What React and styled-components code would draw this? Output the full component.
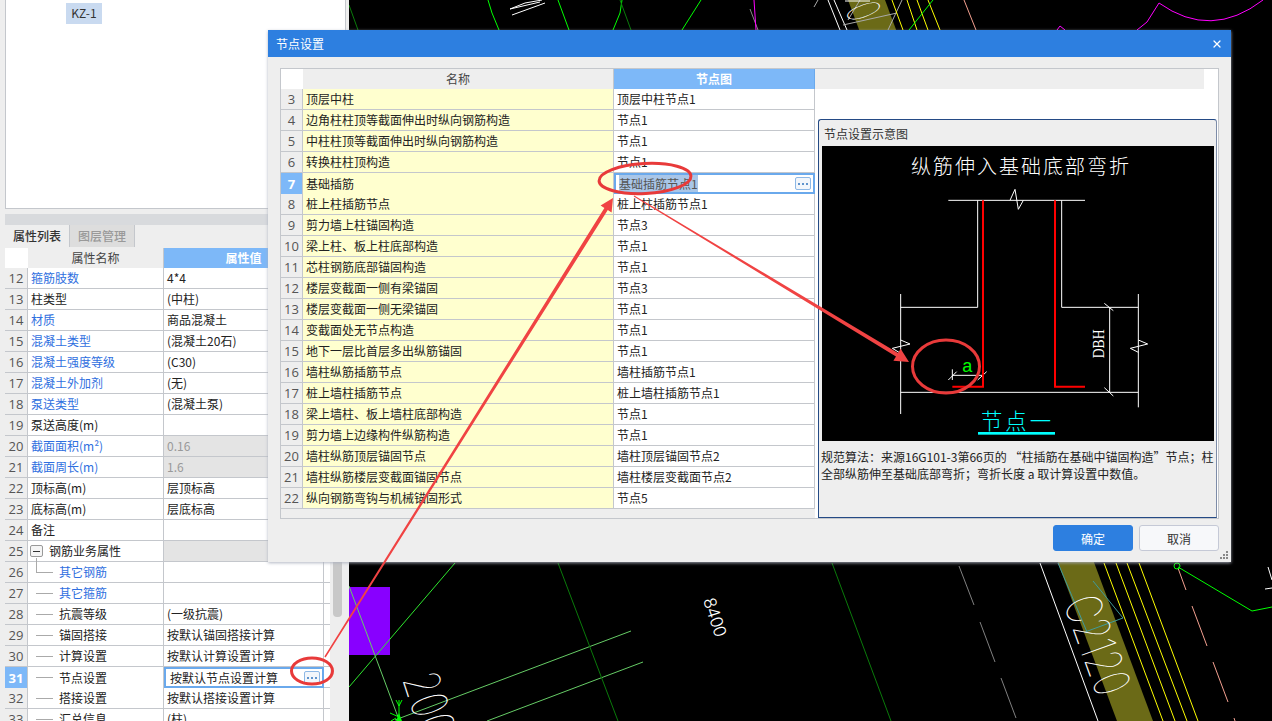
import React from "react";
import styled, { createGlobalStyle } from "styled-components";
import { X } from "lucide-react";

const GlobalStyle = createGlobalStyle`
  html, body { margin: 0; padding: 0; background: #000; }
  * { box-sizing: border-box; }
  body {
    font-family: "Noto Sans CJK SC", "Liberation Sans", sans-serif;
    font-size: 12px;
    color: #222;
  }
`;

const LINE = "#c4c7cc";
const BLUE_HEAD = "#7db8f8";
const BLUE_EDGE = "#6aa9ec";

const Page = styled.div`
  position: relative;
  display: flex;
  width: 1272px;
  height: 721px;
  overflow: hidden;
  background: #000;
`;

const LeftPanel = styled.div`
  flex: 0 0 349px;
  display: flex;
  flex-direction: column;
  padding-left: 5px;
  background: #eee;
`;

const TreeBox = styled.div`
  flex: 0 0 209px;
  margin-right: 3px;
  padding: 3px 0 0 60px;
  background: #fff;
  border: 1px solid ${LINE};
  border-top: 0;
`;

const TreeChip = styled.span`
  display: inline-block;
  width: 36px;
  height: 21px;
  line-height: 20px;
  text-align: center;
  font-size: 12px;
  background: #c9daf0;
  color: #333;
`;

const Band = styled.div`
  flex: 0 0 11px;
  margin-top: 5px;
  background: #d8dadd;
`;

const TabBar = styled.div`
  flex: 0 0 23px;
  display: flex;
`;

const Tab = styled.div`
  width: 65px;
  height: 22px;
  line-height: 22px;
  text-align: center;
  font-weight: 500;
  color: ${(p) => (p.$active ? "#333" : "#999")};
  background: ${(p) => (p.$active ? "#eee" : "#ddd")};
  border-right: 1px solid ${LINE};
`;

const TableWrap = styled.div`
  display: flex;
  flex: 1;
  min-height: 0;
`;

const PropTable = styled.div`
  flex: 0 0 325px;
`;

const Track = styled.div`
  padding-left: 3px;
`;

const Thumb = styled.div`
  width: 9px;
  height: 369px;
  border-radius: 4px;
  background: #c8c8c8;
`;

const PropRow = styled.div`
  display: grid;
  grid-template-columns: 23px 136px 160px 6px;
  height: ${(p) => (p.$head ? 20 : 21)}px;
  border-bottom: 1px solid ${LINE};
  background: #fff;
`;

const Cell = styled.div`
  position: relative;
  display: flex;
  align-items: center;
  height: 100%;
  min-width: 0;
  white-space: nowrap;
  line-height: 20px;
  border-right: 1px solid ${LINE};
`;

const IndexCell = styled(Cell)`
  justify-content: center;
  font-size: 13px;
  font-family: "Open Sans", "Liberation Sans", sans-serif;
  color: ${(p) => (p.$active ? "#fff" : "#555")};
  font-weight: ${(p) => (p.$active ? 700 : 400)};
  background: ${(p) => (p.$active ? BLUE_HEAD : "#eee")};
`;

const HeadBlank = styled(Cell)`
  background: #fff;
  border-right: 0;
`;

const HeadCell = styled(Cell)`
  justify-content: center;
  color: ${(p) => (p.$active ? "#fff" : "#444")};
  font-weight: ${(p) => (p.$active ? 700 : 400)};
  background: ${(p) => (p.$active ? BLUE_HEAD : "#eee")};
  border-right: ${(p) => (p.$active ? `1px solid ${BLUE_EDGE}` : `1px solid ${LINE}`)};
`;

const NameCell = styled(Cell)`
  padding-left: ${(p) => p.$indent || 3}px;
  color: ${(p) => (p.$blue ? "#2f6fe0" : "#222")};
  background: ${(p) => p.$bg || "#fff"};
`;

const ValueCell = styled(Cell)`
  padding-left: 3px;
  color: ${(p) => (p.$grey ? "#999" : "#222")};
  background: ${(p) => (p.$grey ? "#e4e4e4" : "#fff")};
`;

const EditCell = styled.div`
  display: flex;
  align-items: center;
  justify-content: space-between;
  height: 100%;
  min-width: 0;
  white-space: nowrap;
  padding: 0 2px 0 ${(p) => p.$pad || 4}px;
  line-height: 17px;
  border: 2px solid ${BLUE_EDGE};
`;

const Selected = styled.span`
  background: ${(p) => (p.$on ? "#a9c6e8" : "transparent")};
  color: ${(p) => (p.$on ? "#555" : "#222")};
`;

const MoreButton = styled.span`
  flex: 0 0 16px;
  display: flex;
  align-items: center;
  justify-content: center;
  gap: 2px;
  height: 13px;
  border: 1px solid #8db8e6;
  border-radius: 2px;
  background: #f2f6fb;
`;

const MoreDot = styled.i`
  width: 2px;
  height: 2px;
  background: #5f93cc;
`;

const Collapse = styled.span`
  display: flex;
  align-items: center;
  justify-content: center;
  width: 13px;
  height: 12px;
  margin-right: 6px;
  border: 1px solid #999;
  border-radius: 2px;
  background: #f5f5f5;
  &::after {
    content: "";
    width: 7px;
    height: 1px;
    background: #333;
  }
`;

const TreeLine = styled.span`
  position: absolute;
  left: 8px;
  top: 10px;
  width: 17px;
  height: 1px;
  background: #aaa;
  &::before {
    content: "";
    display: ${(p) => (p.$stem ? "block" : "none")};
    position: absolute;
    left: 0;
    top: -14px;
    width: 1px;
    height: 14px;
    background: #aaa;
  }
`;

const Canvas = styled.svg`
  flex: 1;
  display: block;
  height: 721px;
  background: #000;
`;

const Dialog = styled.div`
  position: absolute;
  left: 268px;
  top: 30px;
  width: 963px;
  height: 532px;
  display: flex;
  flex-direction: column;
  background: #eee;
  box-shadow: 0 1px 3px rgba(170, 175, 190, 0.9);
`;

const TitleBar = styled.div`
  flex: 0 0 27px;
  display: flex;
  align-items: center;
  justify-content: space-between;
  padding: 0 8px;
  color: #fff;
  background: #2d7fe0;
  line-height: 27px;
`;

const DialogBody = styled.div`
  flex: 1;
  padding: 11px 12px 0;
  display: flex;
  flex-direction: column;
`;

const Frame = styled.div`
  flex: 0 0 451px;
  display: flex;
  border: 1px solid ${LINE};
  background: #fff;
`;

const NodeTable = styled.div`
  flex: 0 0 534px;
  display: flex;
  flex-direction: column;
  background: #eee;
`;

const NodeRow = styled.div`
  display: grid;
  grid-template-columns: 22px 311px 201px;
  height: ${(p) => (p.$head ? 20 : 21)}px;
  border-bottom: 1px solid ${LINE};
  background: #fff;
`;

const PreviewColumn = styled.div`
  flex: 1;
  display: flex;
  flex-direction: column;
  min-width: 0;
`;

const PreviewHead = styled.div`
  flex: 0 0 20px;
  margin-right: 14px;
  background: #eee;
`;

const PreviewBox = styled.div`
  flex: 1;
  margin: 30px 1px 0 3px;
  padding: 0 3px;
  background: #eee;
  border: 1px solid #244a85;
  border-radius: 3px 3px 0 0;
  border-right-color: #7d8ca8;
`;

const PreviewTitle = styled.div`
  height: 26px;
  line-height: 28px;
  padding-left: 2px;
  color: #333;
`;

const Diagram = styled.svg`
  display: block;
  width: 392px;
  height: 295px;
  background: #000;
`;

const Description = styled.div`
  margin: 7px 0 0 -1px;
  line-height: 17px;
  white-space: nowrap;
`;

const Footer = styled.div`
  display: flex;
  justify-content: flex-end;
  gap: 6px;
  padding-top: 6px;
`;

const Button = styled.button`
  width: 80px;
  height: 26px;
  padding: 0;
  font: inherit;
  border-radius: 3px;
  color: ${(p) => (p.$primary ? "#fff" : "#333")};
  background: ${(p) => (p.$primary ? "#2d7fe0" : "#f7f8fa")};
  border: 1px solid ${(p) => (p.$primary ? "#2d7fe0" : "#c5c9d6")};
`;

const Grip = styled.svg`
  position: absolute;
  right: 2px;
  bottom: 2px;
`;

const Overlay = styled.svg`
  position: absolute;
  left: 0;
  top: 0;
  pointer-events: none;
`;

const props = [
  [12, "箍筋肢数", "4*4", true],
  [13, "柱类型", "(中柱)"],
  [14, "材质", "商品混凝土", true],
  [15, "混凝土类型", "(混凝土20石)", true],
  [16, "混凝土强度等级", "(C30)", true],
  [17, "混凝土外加剂", "(无)", true],
  [18, "泵送类型", "(混凝土泵)", true],
  [19, "泵送高度(m)", ""],
  [20, "截面面积(m²)", "0.16", true, true],
  [21, "截面周长(m)", "1.6", true, true],
  [22, "顶标高(m)", "层顶标高"],
  [23, "底标高(m)", "层底标高"],
  [24, "备注", ""],
];

const childProps = [
  [26, "其它钢筋", "", true],
  [27, "其它箍筋", "", true],
  [28, "抗震等级", "(一级抗震)"],
  [29, "锚固搭接", "按默认锚固搭接计算"],
  [30, "计算设置", "按默认计算设置计算"],
  [31, "节点设置", "按默认节点设置计算"],
  [32, "搭接设置", "按默认搭接设置计算"],
  [33, "汇总信息", "(柱)"],
];

const nodes = [
  [3, "顶层中柱", "顶层中柱节点1"],
  [4, "边角柱柱顶等截面伸出时纵向钢筋构造", "节点1"],
  [5, "中柱柱顶等截面伸出时纵向钢筋构造", "节点1"],
  [6, "转换柱柱顶构造", "节点1"],
  [7, "基础插筋", "基础插筋节点1"],
  [8, "桩上柱插筋节点", "桩上柱插筋节点1"],
  [9, "剪力墙上柱锚固构造", "节点3"],
  [10, "梁上柱、板上柱底部构造", "节点1"],
  [11, "芯柱钢筋底部锚固构造", "节点1"],
  [12, "楼层变截面一侧有梁锚固", "节点3"],
  [13, "楼层变截面一侧无梁锚固", "节点1"],
  [14, "变截面处无节点构造", "节点1"],
  [15, "地下一层比首层多出纵筋锚固", "节点1"],
  [16, "墙柱纵筋插筋节点", "墙柱插筋节点1"],
  [17, "桩上墙柱插筋节点", "桩上墙柱插筋节点1"],
  [18, "梁上墙柱、板上墙柱底部构造", "节点1"],
  [19, "剪力墙上边缘构件纵筋构造", "节点1"],
  [20, "墙柱纵筋顶层锚固节点", "墙柱顶层锚固节点2"],
  [21, "墙柱纵筋楼层变截面锚固节点", "墙柱楼层变截面节点2"],
  [22, "纵向钢筋弯钩与机械锚固形式", "节点5"],
];

// page coordinates, picked off the screenshot
const cadLines = [
  ["#0a7a0a", "349,5 358,30"],
  ["#0f0", "488,0 492,13 499,30"],
  ["#0f0", "558,0 569,30"],
  ["#0f0", "622,0 620,13 613,30"],
  ["#0a7a0a", "620,0 631,30"],
  ["#0f0", "701,0 682,30"],
  ["#888", "750,9 758,30"],
  ["#f0f", "754,0 756,30"],
  ["#fff", "542,0 525,3 510,9 540,2"],
  ["#fff", "512,15 545,3"],
  ["#aaa", "814,7 818,0"],
  ["#fff", "828,0 840,30"],
  ["#fff", "834,0 847,30"],
  ["#aaa", "843,25 897,13"],
  ["#aaa", "888,30 902,0"],
  ["#aaa", "860,0 848,20"],
  ["#fff", "845,1 870,1"],
  ["#ff0", "892,0 903,30"],
  ["#ff0", "907,0 917,30"],
  ["#ff0", "917,0 928,30"],
  ["#ff0", "928,0 940,30"],
  ["#0f0", "933,0 909,30"],
  ["#f4a090", "964,0 976,30"],
  ["#f0f", "1057,30 1060,26 1065,30"],
  ["#f0f", "1137,30 1147,22 1159,3"],
  ["#2ee62e", "455,563 349,687"],
  ["#66cc66", "349,586 398,717"],
  ["#66cc66", "631,631 395,720"],
  ["#66cc66", "643,662 487,721"],
  ["#0a7a0a", "558,563 618,721"],
  ["#0a7a0a", "832,563 891,721"],
  ["#808080", "959,566 974,605"],
  ["#808080", "980,622 995,662"],
  ["#808080", "1001,678 1016,718"],
  ["#fff", "1040,563 1098,721"],
  ["#3f9a9a", "1058,563 1087,632"],
  ["#3f9a9a", "1093,581 1123,618 1085,632"],
  ["#ff0", "1104,563 1163,721"],
  ["#ff0", "1116,563 1175,721"],
  ["#ff0", "1127,563 1187,721"],
  ["#ff0", "1139,563 1198,721"],
  ["#0f0", "1178,567 1252,611 1272,607"],
  ["#f4a090", "1178,568 1186,590"],
  ["#f4a090", "1192,606 1207,646"],
  ["#f4a090", "1213,662 1228,702"],
  ["#f4a090", "1234,718 1235,721"],
  ["#fff", "1268,567 1272,580"],
  ["#fff", "1265,589 1272,588"],
  ["#0f0", "399,700 399,720"],
  ["#0f0", "396,700 399,706 402,700"],
  ["#0f0", "390,713 399,717"],
  ["#0f0", "391,721 396,718"],
];

const CadText = styled.text`
  font-family: Inter, "Liberation Sans", sans-serif;
  font-weight: 100;
  fill: #fff;
`;

// diagram coordinates are 3x the screen, so 3 units is a 1px line
const frameLines = [
  "400,241 810,241",
  "585,241 600,208 610,268 625,241",
  "488,241 488,562 257,562",
  "257,522 257,882",
  "257,817 970,817",
  "740,241 740,562 970,562",
  "970,522 970,862",
  "257,660 285,672 232,685 257,700",
  "970,660 998,672 946,685 970,697",
  "412,766 502,766",
  "412,748 412,780",
  "400,780 425,755",
  "488,780 515,755",
  "884,562 884,817",
  "868,550 895,572",
  "868,803 895,828",
];

const Arrow = ({ from, to, w0, w1, head }) => {
  const dx = to[0] - from[0];
  const dy = to[1] - from[1];
  const len = Math.hypot(dx, dy);
  const ux = dx / len;
  const uy = dy / len;
  const nx = -uy;
  const ny = ux;
  const bx = to[0] - ux * head;
  const by = to[1] - uy * head;
  const pts = [
    [from[0] + (nx * w0) / 2, from[1] + (ny * w0) / 2],
    [bx + (nx * w1) / 2, by + (ny * w1) / 2],
    [bx + (nx * head) / 2, by + (ny * head) / 2],
    to,
    [bx - (nx * head) / 2, by - (ny * head) / 2],
    [bx - (nx * w1) / 2, by - (ny * w1) / 2],
    [from[0] - (nx * w0) / 2, from[1] - (ny * w0) / 2],
  ];
  return <polygon points={pts.map((p) => p.join(",")).join(" ")} fill="#f04343" />;
};

const More = () => (
  <MoreButton>
    <MoreDot />
    <MoreDot />
    <MoreDot />
  </MoreButton>
);

const App = () => {
  return (
    <Page>
      <GlobalStyle />
      <LeftPanel>
        <TreeBox>
          <TreeChip>KZ-1</TreeChip>
        </TreeBox>
        <Band />
        <TabBar>
          <Tab $active>属性列表</Tab>
          <Tab>图层管理</Tab>
        </TabBar>
        <TableWrap>
          <PropTable>
            <PropRow $head>
              <HeadBlank />
              <HeadCell>属性名称</HeadCell>
              <HeadCell $active>属性值</HeadCell>
            </PropRow>
            {props.map(([n, name, value, blue, grey]) => (
              <PropRow key={n}>
                <IndexCell>{n}</IndexCell>
                <NameCell $blue={blue}>{name}</NameCell>
                <ValueCell $grey={grey}>{value}</ValueCell>
              </PropRow>
            ))}
            <PropRow>
              <IndexCell>25</IndexCell>
              <NameCell $indent={2}>
                <Collapse />
                钢筋业务属性
              </NameCell>
              <ValueCell $grey />
            </PropRow>
            {childProps.map(([n, name, value, blue]) => (
              <PropRow key={n}>
                <IndexCell $active={n === 31}>{n}</IndexCell>
                <NameCell $blue={blue} $indent={31}>
                  <TreeLine $stem={n === 26} />
                  {name}
                </NameCell>
                {n === 31 ? (
                  <EditCell>
                    <Selected>{value}</Selected>
                    <More />
                  </EditCell>
                ) : (
                  <ValueCell>{value}</ValueCell>
                )}
              </PropRow>
            ))}
          </PropTable>
          <Track>
            <Thumb />
          </Track>
        </TableWrap>
      </LeftPanel>

      <Canvas viewBox="349 0 923 721" width="923" height="721" fill="none">
        <polygon points="848,0 885,0 1153,721 1117,721" fill="#6b6a17" />
        <rect x="349" y="587" width="41" height="68" fill="#8800ff" />
        {cadLines.map(([color, pts]) => (
          <polyline key={pts} points={pts} stroke={color} />
        ))}
        <path d="M1159 3Q1211 40 1263 0" stroke="#f0f" />
        <circle cx="1177" cy="566" r="3" stroke="#0f0" />
        <polygon points="396,721 399,713 402,721" fill="#0f0" />
        <CadText transform="translate(845 9) rotate(70) scale(0.6 1)" fontSize="46">0</CadText>
        <CadText transform="translate(703 600) rotate(72)" fontSize="17" style={{ fontWeight: 300 }} letterSpacing="-0.6">8400</CadText>
        <CadText transform="translate(402 679) rotate(72) scale(0.72 1)" fontSize="50">200</CadText>
        <CadText transform="translate(1063 603) rotate(70) scale(0.7 1)" fontSize="50">C2120</CadText>
      </Canvas>

      <Dialog>
        <TitleBar>
          节点设置
          <X size={12} strokeWidth={2.5} color="#fff" />
        </TitleBar>
        <DialogBody>
          <Frame>
            <NodeTable>
              <NodeRow $head>
                <HeadBlank />
                <HeadCell>名称</HeadCell>
                <HeadCell $active>节点图</HeadCell>
              </NodeRow>
              {nodes.map(([n, name, value]) => (
                <NodeRow key={n}>
                  <IndexCell $active={n === 7}>{n}</IndexCell>
                  <NameCell $bg="#ffffcf">{name}</NameCell>
                  {n === 7 ? (
                    <EditCell $pad={3}>
                      <Selected $on>{value}</Selected>
                      <More />
                    </EditCell>
                  ) : (
                    <ValueCell>{value}</ValueCell>
                  )}
                </NodeRow>
              ))}
            </NodeTable>
            <PreviewColumn>
              <PreviewHead />
              <PreviewBox>
                <PreviewTitle>节点设置示意图</PreviewTitle>
                <Diagram viewBox="21 78 1176 885" fill="none">
                  <text x="288" y="163" fontSize="60" fontWeight="300" textLength="654" fill="#fff" fontFamily="'Noto Sans CJK SC', sans-serif">
                    纵筋伸入基础底部弯折
                  </text>
                  {frameLines.map((pts) => (
                    <polyline key={pts} points={pts} stroke="#fff" strokeWidth="3" />
                  ))}
                  <polyline points="504,241 504,800 412,800" stroke="#f00" strokeWidth="6" />
                  <polyline points="720,241 720,800 810,800" stroke="#f00" strokeWidth="6" />
                  <text x="442" y="757" fontSize="54" fill="#0f0" fontFamily="'Liberation Sans', sans-serif">a</text>
                  <text transform="translate(868 715) rotate(-90)" fontSize="52" textLength="87" lengthAdjust="spacingAndGlyphs" fill="#fff" fontFamily="'Liberation Serif', serif">DBH</text>
                  <text x="498" y="926" fontSize="64" fontWeight="300" textLength="210" fill="#0ff" fontFamily="'Noto Sans CJK SC', sans-serif">节点一</text>
                  <rect x="489" y="936" width="231" height="8" fill="#0ff" />
                </Diagram>
                <Description>
                  规范算法：来源16G101-3第66页的 “柱插筋在基础中锚固构造”节点；柱
                  <br />
                  全部纵筋伸至基础底部弯折；弯折长度 a 取计算设置中数值。
                </Description>
              </PreviewBox>
            </PreviewColumn>
          </Frame>
          <Footer>
            <Button $primary>确定</Button>
            <Button>取消</Button>
          </Footer>
        </DialogBody>
        <Grip width="9" height="9" viewBox="0 0 9 9" fill="#888">
          <rect x="6" y="0" width="2" height="2" />
          <rect x="3" y="3" width="2" height="2" />
          <rect x="6" y="3" width="2" height="2" />
          <rect x="0" y="6" width="2" height="2" />
          <rect x="3" y="6" width="2" height="2" />
          <rect x="6" y="6" width="2" height="2" />
        </Grip>
      </Dialog>

      <Overlay width="1272" height="721" viewBox="0 0 1272 721" fill="none">
        <Arrow from={[325, 657]} to={[613, 198]} w0={1.5} w1={4} head={13} />
        <Arrow from={[634, 196]} to={[909, 362]} w0={1} w1={4} head={14} />
        <ellipse cx="645" cy="178.5" rx="46" ry="15" transform="rotate(-3 645 178.5)" stroke="#e83a3a" strokeWidth="3" />
        <ellipse cx="312" cy="671" rx="20.5" ry="13" stroke="#e83a3a" strokeWidth="3" />
        <ellipse cx="946" cy="366.5" rx="33.5" ry="26.5" stroke="#e83a3a" strokeWidth="3" />
      </Overlay>
    </Page>
  );
};

export default App;
